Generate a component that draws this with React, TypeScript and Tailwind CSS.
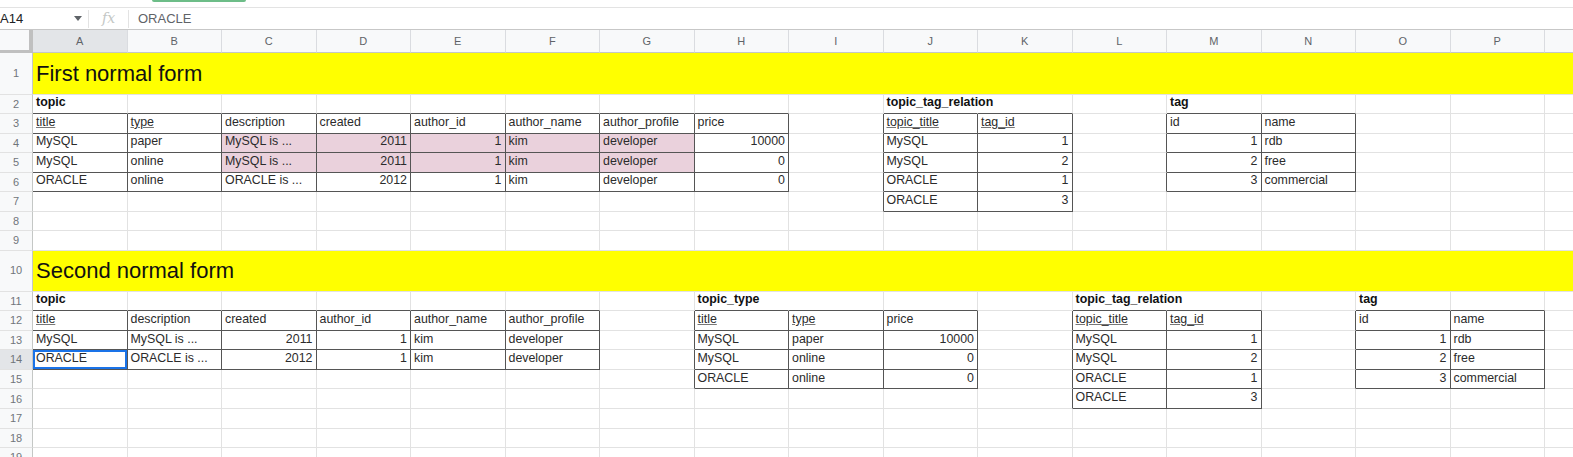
type Cell = { t: string; b?: boolean; u?: boolean; pink?: boolean; spill?: boolean };

const LETTERS = ["A", "B", "C", "D", "E", "F", "G", "H", "I", "J", "K", "L", "M", "N", "O", "P"];

// cell contents keyed by "row,col" (col 0 = A)
const cells: Record<string, Cell> = {};

function put(row: number, col: number, values: (string | Cell)[]) {
  values.forEach((v, i) => {
    cells[`${row},${col + i}`] = typeof v === "string" ? { t: v } : v;
  });
}

const u = (t: string): Cell => ({ t, u: true });
const p = (t: string): Cell => ({ t, pink: true });

// first normal form
put(2, 0, [{ t: "topic", b: true }]);
put(3, 0, [u("title"), u("type"), "description", "created", "author_id", "author_name", "author_profile", "price"]);
put(4, 0, ["MySQL", "paper", p("MySQL is ..."), p("2011"), p("1"), p("kim"), p("developer"), "10000"]);
put(5, 0, ["MySQL", "online", p("MySQL is ..."), p("2011"), p("1"), p("kim"), p("developer"), "0"]);
put(6, 0, ["ORACLE", "online", "ORACLE is ...", "2012", "1", "kim", "developer", "0"]);

put(2, 9, [{ t: "topic_tag_relation", b: true, spill: true }]);
put(3, 9, [u("topic_title"), u("tag_id")]);
put(4, 9, ["MySQL", "1"]);
put(5, 9, ["MySQL", "2"]);
put(6, 9, ["ORACLE", "1"]);
put(7, 9, ["ORACLE", "3"]);

put(2, 12, [{ t: "tag", b: true }]);
put(3, 12, ["id", "name"]);
put(4, 12, ["1", "rdb"]);
put(5, 12, ["2", "free"]);
put(6, 12, ["3", "commercial"]);

// second normal form
put(11, 0, [{ t: "topic", b: true }]);
put(12, 0, [u("title"), "description", "created", "author_id", "author_name", "author_profile"]);
put(13, 0, ["MySQL", "MySQL is ...", "2011", "1", "kim", "developer"]);
put(14, 0, ["ORACLE", "ORACLE is ...", "2012", "1", "kim", "developer"]);

put(11, 7, [{ t: "topic_type", b: true, spill: true }]);
put(12, 7, [u("title"), u("type"), "price"]);
put(13, 7, ["MySQL", "paper", "10000"]);
put(14, 7, ["MySQL", "online", "0"]);
put(15, 7, ["ORACLE", "online", "0"]);

put(11, 11, [{ t: "topic_tag_relation", b: true, spill: true }]);
put(12, 11, [u("topic_title"), u("tag_id")]);
put(13, 11, ["MySQL", "1"]);
put(14, 11, ["MySQL", "2"]);
put(15, 11, ["ORACLE", "1"]);
put(16, 11, ["ORACLE", "3"]);

put(11, 14, [{ t: "tag", b: true }]);
put(12, 14, ["id", "name"]);
put(13, 14, ["1", "rdb"]);
put(14, 14, ["2", "free"]);
put(15, 14, ["3", "commercial"]);

// bordered tables: [r1, r2, c1, c2]
const tables = [
  [3, 6, 0, 7],
  [3, 7, 9, 10],
  [3, 6, 12, 13],
  [12, 14, 0, 5],
  [12, 15, 7, 9],
  [12, 16, 11, 12],
  [12, 15, 14, 15],
];

const inTable = (r: number, c: number) =>
  tables.some(([r1, r2, c1, c2]) => r >= r1 && r <= r2 && c >= c1 && c <= c2);

const titles: Record<number, string> = { 1: "First normal form", 10: "Second normal form" };

function DataCell({ row, col }: { row: number; col: number }) {
  const cell = cells[`${row},${col}`];
  const darkRight = inTable(row, col) || inTable(row, col + 1);
  const darkBottom = inTable(row, col) || inTable(row + 1, col);
  const numeric = cell && /^\d+$/.test(cell.t);
  const selected = row === 14 && col === 0;
  return (
    <div
      className={clsx(
        "flex items-end whitespace-nowrap border-r border-b px-[3px] pb-[1px] text-[12.4px] text-[#2b2b2b]",
        darkRight ? "border-r-[#555555]" : cell?.spill ? "border-r-transparent" : "border-r-[#e2e2e2]",
        darkBottom ? "border-b-[#555555]" : "border-b-[#e2e2e2]",
        cell?.pink && "bg-[#ead1dc]",
        numeric && "justify-end",
        cell?.b && "font-bold text-[#111]",
        selected && "shadow-[inset_0_0_0_2px_#1a73e8]"
      )}
    >
      {cell && <span className={clsx(cell.u && "underline decoration-[#777] underline-offset-1")}>{cell.t}</span>}
    </div>
  );
}

function clsx(...parts: (string | false | undefined | null)[]) {
  return parts.filter(Boolean).join(" ");
}

export default function App() {
  const rows = Array.from({ length: 19 }, (_, i) => i + 1);
  return (
    <div className="h-[457px] w-full overflow-hidden bg-white font-['Liberation_Sans',Arial,sans-serif]">
      {/* toolbar remnant */}
      <div className="h-[8px] border-b border-[#e3e3e3]">
        <div className="ml-[152px] h-[2px] w-[94px] rounded-b-sm bg-[#6dbd88]" />
      </div>

      {/* formula bar */}
      <div className="flex h-[22px] items-center border-b border-[#c7c7c7] text-[13px]">
        <div className="flex w-[88px] items-center pl-0 pr-[6px]">
          <span className="text-[#202124]">A14</span>
          <svg className="ml-auto" width="8" height="5" viewBox="0 0 8 5">
            <path d="M0 0h8L4 5z" fill="#5f6368" />
          </svg>
        </div>
        <div className="flex h-[18px] w-[41px] items-center justify-center border-x border-[#e3e3e3]">
          <span className="font-['DejaVu_Serif',serif] text-[14px] italic text-[#c4c7c5]">fx</span>
        </div>
        <span className="pl-[9px] text-[#5f6368]">ORACLE</span>
      </div>

      {/* sheet grid */}
      <div className="grid grid-cols-[33px_repeat(16,94.5px)_1fr] grid-rows-[23px_41.5px_repeat(8,19.5px)_41px_repeat(9,19.6px)]">
        <div className="border-r-4 border-b-[3px] border-[#c0c0c0] bg-[#f8f9fa]" />
        {LETTERS.map((l) => (
          <div
            key={l}
            className={clsx(
              "flex items-center justify-center border-r border-b border-r-[#dadce0] border-b-[#c4c7c5] text-[11px] text-[#5f6368]",
              l === "A" ? "bg-[#e3e5e8]" : "bg-[#f8f9fa]"
            )}
          >
            {l}
          </div>
        ))}
        <div className="border-b border-[#c4c7c5] bg-[#f8f9fa]" />

        {rows.map((row) => (
          <div key={row} className="contents">
            <div
              className={clsx(
                "flex items-center justify-center border-r border-b border-r-[#c4c7c5] border-b-[#e2e2e2] text-[11px] text-[#70757a]",
                row === 14 ? "bg-[#e3e5e8] text-[#444]" : "bg-[#f8f9fa]"
              )}
            >
              {row}
            </div>
            {titles[row] ? (
              <div className="col-span-17 flex items-end border-b border-[#e2e2e2] bg-[#ffff00] px-[3px] pb-[4px] text-[22px] text-[#111]">
                {titles[row]}
              </div>
            ) : (
              <>
                {LETTERS.map((_, col) => (
                  <DataCell key={col} row={row} col={col} />
                ))}
                <div className="border-b border-[#e2e2e2]" />
              </>
            )}
          </div>
        ))}
      </div>
    </div>
  );
}
